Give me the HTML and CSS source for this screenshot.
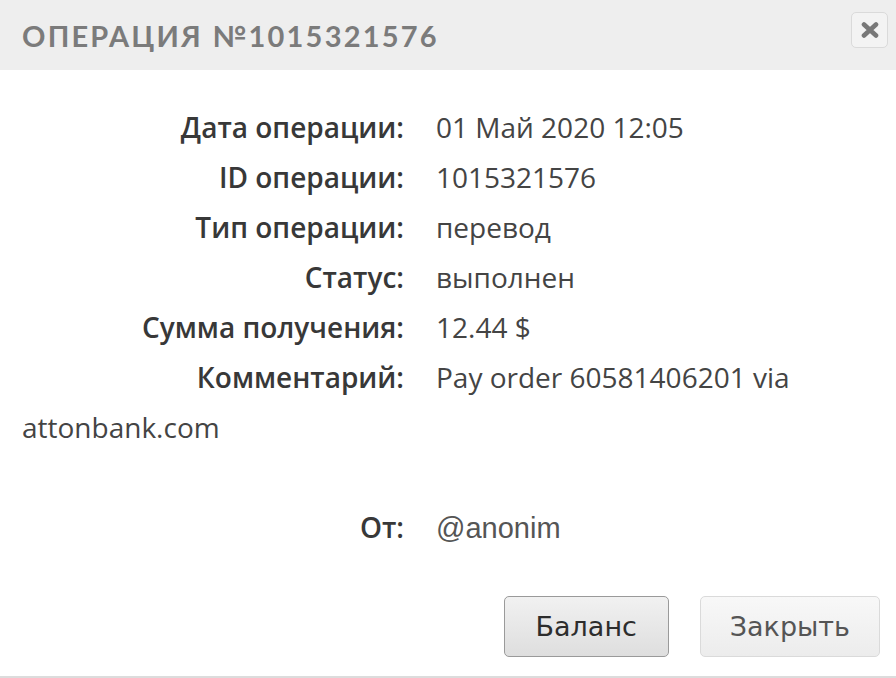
FILE: index.html
```html
<!DOCTYPE html>
<html lang="ru">
<head>
  <meta charset="UTF-8">
  <title>Операция №1015321576</title>
  <link rel="stylesheet" href="styles.css">
</head>
<body>

  <div class="modal">
    <div class="modal-header">
      <h2 class="modal-title">Операция №1015321576</h2>
      <button class="modal-close" title="Закрыть">
        <svg width="18" height="16" viewBox="0 0 18 16">
          <path d="M3 2.5 L15 13.5 M15 2.5 L3 13.5" stroke="#787878" stroke-width="4.6" stroke-linecap="round"/>
        </svg>
      </button>
    </div>

    <div class="modal-body">
      <div class="row"><span class="label">Дата операции:</span><span class="value">01 Май 2020 12:05</span></div>
      <div class="row"><span class="label">ID операции:</span><span class="value">1015321576</span></div>
      <div class="row"><span class="label">Тип операции:</span><span class="value">перевод</span></div>
      <div class="row"><span class="label">Статус:</span><span class="value">выполнен</span></div>
      <div class="row"><span class="label">Сумма получения:</span><span class="value">12.44 $</span></div>
      <div class="row"><span class="label">Комментарий:</span><span class="value">Pay order 60581406201 via attonbank.com</span></div>
      <div class="row row-from"><span class="label">От:</span><span class="value value-user">@anonim</span></div>
    </div>

    <div class="modal-footer">
      <button class="btn btn-primary">Баланс</button>
      <button class="btn">Закрыть</button>
    </div>
  </div>

</body>
</html>
```

FILE: styles.css
```css
body {
  margin: 0;
  background: #fff;
  font-family: 'Open Sans', sans-serif;
}

.modal {
  width: 896px;
  height: 678px;
  box-sizing: border-box;
  border-bottom: 2px solid #dcdcdc;
  display: flex;
  flex-direction: column;
}

.modal-header {
  height: 70px;
  flex: 0 0 70px;
  background: #eeeeee;
  display: flex;
  align-items: center;
  justify-content: space-between;
  padding: 0 8px 0 22px;
}

.modal-title {
  margin: 0;
  font-family: 'Lato', sans-serif;
  font-weight: 700;
  font-size: 29px;
  letter-spacing: 2.2px;
  text-transform: uppercase;
  color: #7b7b7b;
}

.modal-close {
  width: 37px;
  height: 36px;
  margin-top: -10px;
  padding: 0;
  border: 1px solid #dadada;
  border-radius: 5px;
  background: #f3f3f3;
  display: flex;
  align-items: center;
  justify-content: center;
  cursor: pointer;
}

.modal-body {
  padding: 32px 22px 0;
  font-size: 28px;
  line-height: 50px;
  color: #3a3a3a;
}

.label {
  display: inline-block;
  width: 382px;
  margin-right: 32px;
  text-align: right;
  font-weight: 600;
  color: #383838;
}

.value {
  color: #444;
}

.row-from {
  margin-top: 50px;
}

.value-user {
  font-family: 'Liberation Sans', sans-serif;
  font-size: 29px;
  color: #555;
}

.modal-footer {
  display: flex;
  justify-content: flex-end;
  gap: 31px;
  padding: 43px 16px 0;
}

.btn {
  height: 61px;
  padding: 0 29px;
  border: 1px solid #dadada;
  border-radius: 5px;
  background: linear-gradient(#f8f8f8, #ececec);
  font-family: 'DejaVu Sans', sans-serif;
  font-size: 27px;
  color: #555;
  cursor: pointer;
}

.btn-primary {
  width: 165px;
  padding: 0;
  border-color: #9a9a9a;
  background: linear-gradient(#f1f1f1, #dedede);
  color: #2d2d2d;
}
```
